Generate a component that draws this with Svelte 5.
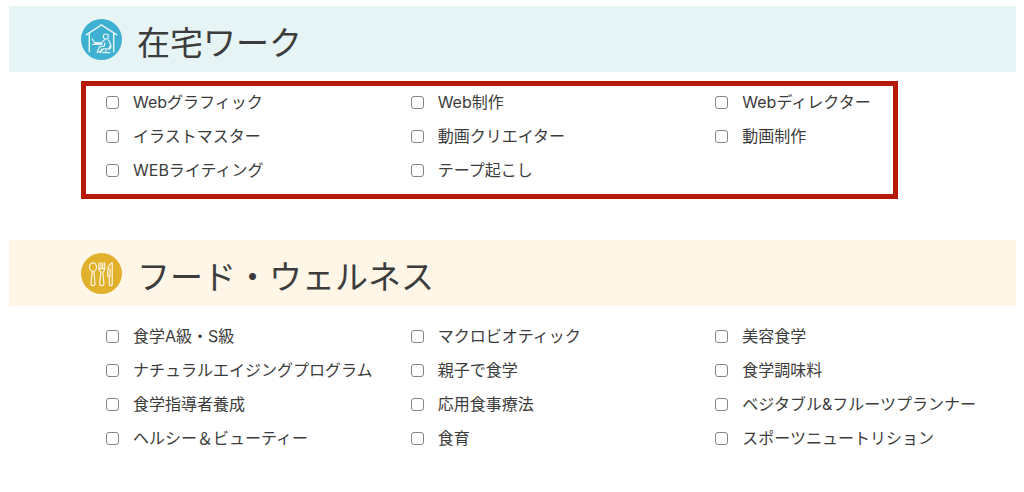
<script lang="ts">
  interface Category {
    id: string;
    title: string;
    highlighted: boolean;
    courses: string[];
  }

  const categories: Category[] = [
    {
      id: 'home',
      title: '在宅ワーク',
      highlighted: true,
      courses: [
        'Webグラフィック',
        'Web制作',
        'Webディレクター',
        'イラストマスター',
        '動画クリエイター',
        '動画制作',
        'WEBライティング',
        'テープ起こし'
      ]
    },
    {
      id: 'food',
      title: 'フード・ウェルネス',
      highlighted: false,
      courses: [
        '食学A級・S級',
        'マクロビオティック',
        '美容食学',
        'ナチュラルエイジングプログラム',
        '親子で食学',
        '食学調味料',
        '食学指導者養成',
        '応用食事療法',
        'ベジタブル&フルーツプランナー',
        'ヘルシー＆ビューティー',
        '食育',
        'スポーツニュートリション'
      ]
    }
  ];

  let selected = $state<string[]>([]);
</script>

<main>
  {#each categories as category (category.id)}
    <section aria-labelledby="{category.id}-title">
      <header class="band band-{category.id}">
        <svg class="icon" viewBox="0 0 42 42" aria-hidden="true">
          <circle cx="21" cy="21" r="21" />
          {#if category.id === 'home'}
            <path class="house" d="M5 16.500 21 6l16 10.500M8.500 15v19M33.500 15v19" />
            <circle class="line" cx="25.500" cy="18" r="2.600" />
            <path
              class="line"
              d="M24 21.500l-3.500 3-6-.3M28 21.500c2.500 3 2.500 6.500.5 9h-5.500l-3 4M24.500 24.500l-.5 3-5 1-2.500 5.500h2.500l2.500-3.500M11.500 20.500l3 4.500h7M12 26h9M29.500 25c2 2 1.500 5-1 6.500M25.500 31v3.500M22.500 34.500h7"
            />
          {:else}
            <ellipse class="line" cx="12.300" cy="14.500" rx="3.600" ry="4.300" />
            <path class="line" d="M11.500 19l-1.300 12.500c0 2.600 4.200 2.600 4.200 0L13.200 19" />
            <path
              class="line"
              d="M18.300 10v6c0 2 1 3 2 3.500l-1.200 12c0 2.600 4.400 2.600 4.400 0l-1.200-12c1.200-.5 2-1.500 2-3.500v-6M20.400 10v6M22.300 10v6M18.500 16h5.600"
            />
            <path class="line" d="M32 10v22c0 2-3 2-3 0v-7.500l-1.700-1c-.3-6 .5-12 4.700-13.500zM29.700 16v8" />
          {/if}
        </svg>
        <h2 id="{category.id}-title">{category.title}</h2>
      </header>

      <ul class="courses" class:highlighted={category.highlighted}>
        {#each category.courses as course (course)}
          <li>
            <label>
              <input type="checkbox" value={course} bind:group={selected} />
              <span>{course}</span>
            </label>
          </li>
        {/each}
      </ul>
    </section>
  {/each}
</main>

<style>
  :global(body) {
    margin: 0;
    background: #fff;
  }

  main {
    display: flex;
    flex-direction: column;
    gap: 53px;
    padding: 6px 0 32px;
    color: #3c3c3c;
    font-family: Inter, 'Noto Sans CJK JP', sans-serif;
  }

  .band {
    display: flex;
    align-items: center;
    gap: 15px;
    height: 66px;
    margin: 0 8px 0 9px;
    padding-left: 72px;
    box-sizing: border-box;
  }

  .band-home {
    background: #e6f4f5;
    --accent: #3eb1d3;
  }

  .band-food {
    background: #fff6e7;
    --accent: #e2b12c;
  }

  .icon {
    flex: none;
    width: 41px;
    height: 41px;
    fill: var(--accent);
  }

  .house {
    fill: none;
    stroke: #e6f4f5;
    stroke-width: 1.5;
  }

  .line {
    fill: none;
    stroke: #fff6e7;
    stroke-width: 1.2;
    stroke-linejoin: round;
    stroke-linecap: round;
  }

  .band-home .line {
    stroke: #e6f4f5;
  }

  h2 {
    margin: 0;
    padding-top: 8px;
    font-size: 33px;
    font-weight: 400;
    line-height: 40px;
  }

  .courses {
    position: relative;
    display: grid;
    grid-template-columns: repeat(3, 1fr);
    margin: 0;
    padding: 13px 4px 0 106px;
    list-style: none;
  }

  /* Red frame laid over the highlighted group */
  .highlighted::after {
    content: '';
    position: absolute;
    inset: 9px 126px -12px 81px;
    border: 5px solid #b51a00;
    pointer-events: none;
  }

  label {
    display: flex;
    align-items: center;
    gap: 14px;
    height: 34px;
    font-size: 16px;
    line-height: 24px;
    white-space: nowrap;
    cursor: pointer;
  }

  input {
    flex: none;
    appearance: none;
    width: 13px;
    height: 13px;
    margin: 0;
    border: 1px solid #858585;
    border-radius: 3px;
    background: #fff;
    cursor: pointer;
  }

  input:checked {
    border-color: #0075ff;
    background: #0075ff;
    box-shadow: inset 0 0 0 2px #fff;
  }
</style>
